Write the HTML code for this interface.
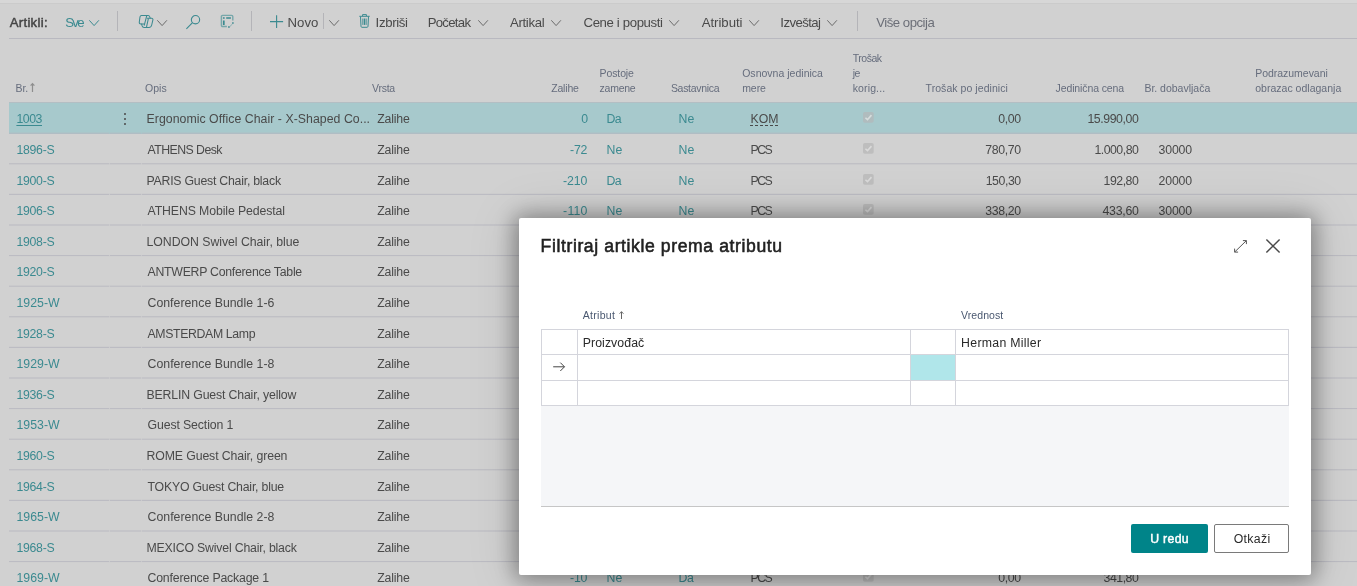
<!DOCTYPE html>
<html lang="sr-Latn">
<head>
<meta charset="utf-8">
<title>Artikli</title>
<style>
html,body{margin:0;padding:0;}
body{width:1357px;height:586px;overflow:hidden;position:relative;background:#d1d1d1;font-family:"Liberation Sans",sans-serif;}
.t{position:absolute;white-space:pre;}
.abs{position:absolute;}
.hl{position:absolute;height:1px;background:#bdbdc4;}
.vsep{position:absolute;width:1px;background:#b9b9b9;}
#dlg{position:absolute;left:519px;top:218px;width:792px;height:357px;background:#fff;box-shadow:0 1px 22px 4px rgba(0,0,0,.36),0 2px 50px 6px rgba(0,0,0,.10);border-radius:2px;}
svg{position:absolute;overflow:visible;}
.gl{position:absolute;left:0;top:0;width:1357px;height:586px;will-change:transform;}
</style>
</head>
<body>
<div class="abs" style="left:0px;top:0px;width:1357px;height:3px;background:#d7d7d7;"></div>
<div class="abs" style="left:0px;top:3px;width:1357px;height:1px;background:#cbcbcb;"></div>
<div class="abs" style="left:9px;top:38px;width:1348px;height:1px;background:#b9b9c0;"></div>
<div class="abs" style="left:117px;top:11px;width:1px;height:20px;background:#b4b4b8;"></div>
<div class="abs" style="left:251px;top:11px;width:1px;height:20px;background:#b4b4b8;"></div>
<div class="abs" style="left:857px;top:11px;width:1px;height:20px;background:#b4b4b8;"></div>
<div class="abs" style="left:323px;top:13px;width:1px;height:16px;background:#b4b4b8;"></div>
<svg style="left:89.2px;top:20px" width="10.2" height="6.6" viewBox="0 0 10.2 6.6"><path d="M0.3 0.3 L5.1 5.6 L9.899999999999999 0.3" fill="none" stroke="#3b8a90" stroke-width="1"/></svg>
<svg style="left:157.3px;top:20px" width="10.2" height="6.6" viewBox="0 0 10.2 6.6"><path d="M0.3 0.3 L5.1 5.6 L9.899999999999999 0.3" fill="none" stroke="#6a6a6a" stroke-width="1"/></svg>
<svg style="left:328.8px;top:20px" width="10.2" height="6.6" viewBox="0 0 10.2 6.6"><path d="M0.3 0.3 L5.1 5.6 L9.899999999999999 0.3" fill="none" stroke="#6a6a6a" stroke-width="1"/></svg>
<svg style="left:477.5px;top:20px" width="10.2" height="6.6" viewBox="0 0 10.2 6.6"><path d="M0.3 0.3 L5.1 5.6 L9.899999999999999 0.3" fill="none" stroke="#6a6a6a" stroke-width="1"/></svg>
<svg style="left:550.8px;top:20px" width="10.2" height="6.6" viewBox="0 0 10.2 6.6"><path d="M0.3 0.3 L5.1 5.6 L9.899999999999999 0.3" fill="none" stroke="#6a6a6a" stroke-width="1"/></svg>
<svg style="left:668.7px;top:20px" width="10.2" height="6.6" viewBox="0 0 10.2 6.6"><path d="M0.3 0.3 L5.1 5.6 L9.899999999999999 0.3" fill="none" stroke="#6a6a6a" stroke-width="1"/></svg>
<svg style="left:748.6px;top:20px" width="10.2" height="6.6" viewBox="0 0 10.2 6.6"><path d="M0.3 0.3 L5.1 5.6 L9.899999999999999 0.3" fill="none" stroke="#6a6a6a" stroke-width="1"/></svg>
<svg style="left:827.2px;top:20px" width="10.2" height="6.6" viewBox="0 0 10.2 6.6"><path d="M0.3 0.3 L5.1 5.6 L9.899999999999999 0.3" fill="none" stroke="#6a6a6a" stroke-width="1"/></svg>
<svg style="left:139px;top:14.900px" width="15" height="13" viewBox="0 0 15 13"><g fill="none" stroke="#3b8a90" stroke-width="1.05" stroke-linejoin="round" stroke-linecap="round"><path d="M5.200 8.900H1.700C.7 8.900.1 8 .3 7L1 1.800C1.200 1 1.600.5 2.400.5h6.800c.8 0 1.300.5 1.500 1.200l.5 1.500"/><path d="M7.700.8 5.300 10.200"/><path d="M8.300 3.200h4.300c.9 0 1.500.8 1.300 1.700L12.700 10c-.3 1.400-1.300 2.400-2.700 2.400H5c-1 0-1.600-.6-1.900-1.500L2.600 9"/><path d="M9.300 3.800 7.500 12.200"/></g></svg>
<svg style="left:186px;top:14px" width="16" height="16" viewBox="0 0 16 16"><g fill="none" stroke="#3b8a90" stroke-width="1.1"><circle cx="9.500" cy="5.700" r="4.150"/><path d="M6.500 8.700 0.400 14.800"/></g></svg>
<svg style="left:220px;top:14px" width="15" height="15" viewBox="0 0 15 15"><g fill="none" stroke="#3b8a90"><path d="M6.900 12.500H2.600c-.7 0-1.200-.5-1.200-1.200V2.600c0-.7.500-1.200 1.200-1.200h9c.7 0 1.200.5 1.200 1.200v3.900" stroke-width="1.400" opacity=".6"/><path d="M3.800 3.200v1.600M3.800 6.400v4.600M6.200 4h4.700" stroke-width="1.700"/><path d="M12.900 8.300v1.500M8.100 13h1.600" stroke-width="1.500"/><path d="M12.500 9.900 9.700 12.700" stroke-width="0.700" opacity=".7"/></g></svg>
<svg style="left:270px;top:15px" width="14" height="14" viewBox="0 0 14 14"><path d="M6.600 0.300v12.800M0 6.600h13.100" fill="none" stroke="#3b8a90" stroke-width="1.100"/></svg>
<svg style="left:359.400px;top:14.200px" width="11" height="14" viewBox="0 0 11 14"><g fill="none" stroke="#3b8a90" stroke-width="1"><path d="M0.300 2.300h10.400M3.600 2.200V0.600h3.800v1.600M1.500 2.500l.5 9.900c0 .5.400.9.900.9h5.200c.5 0 .9-.4.900-.9l.5-9.900"/><path d="M3.900 4.500v6.400M5.500 4.500v6.400M7.100 4.500v6.400"/></g></svg>
<svg style="left:30.3px;top:83.1px" width="5" height="8.9" viewBox="0 0 5 8.9"><path d="M2.500 8.9V0.700M0.600 2.700 2.500 0.700 4.400 2.700" fill="none" stroke="#8e8e8e" stroke-width="1.2"/></svg>
<div class="abs" style="left:9px;top:102px;width:1348px;height:31.5px;background:#a7c9cc;"></div>
<div class="abs" style="left:9px;top:102px;width:1348px;height:1px;background:#b3bec3;"></div>
<svg style="left:0;top:0" width="1357" height="586" viewBox="0 0 1357 586"><path d="M9 133.20H109.100M109.800 133.20H141M141.700 133.20H1357M9 163.80H109.100M109.800 163.80H141M141.700 163.80H1357M9 194.40H109.100M109.800 194.40H141M141.700 194.40H1357M9 225.00H109.100M109.800 225.00H141M141.700 225.00H1357M9 255.60H109.100M109.800 255.60H141M141.700 255.60H1357M9 286.20H109.100M109.800 286.20H141M141.700 286.20H1357M9 316.80H109.100M109.800 316.80H141M141.700 316.80H1357M9 347.40H109.100M109.800 347.40H141M141.700 347.40H1357M9 378.00H109.100M109.800 378.00H141M141.700 378.00H1357M9 408.60H109.100M109.800 408.60H141M141.700 408.60H1357M9 439.20H109.100M109.800 439.20H141M141.700 439.20H1357M9 469.80H109.100M109.800 469.80H141M141.700 469.80H1357M9 500.40H109.100M109.800 500.40H141M141.700 500.40H1357M9 531.00H109.100M109.800 531.00H141M141.700 531.00H1357M9 561.60H109.100M109.800 561.60H141M141.700 561.60H1357M9 592.20H109.100M109.800 592.20H141M141.700 592.20H1357" fill="none" stroke="#b7b7c0" stroke-width="0.9"/></svg>
<div class="abs" style="left:124.4px;top:113.0px;width:1.8px;height:1.8px;background:#4c4c4c;border-radius:50%;"></div>
<div class="abs" style="left:124.4px;top:118.0px;width:1.8px;height:1.8px;background:#4c4c4c;border-radius:50%;"></div>
<div class="abs" style="left:124.4px;top:123.0px;width:1.8px;height:1.8px;background:#4c4c4c;border-radius:50%;"></div>
<svg style="left:863.100px;top:112.3px" width="10.700" height="10.700" viewBox="0 0 11 11"><rect width="11" height="11" rx="1.800" fill="#b0bcbe"/><path d="M2.500 5.900 4.600 7.900 8.700 3.200" fill="none" stroke="#d6dddd" stroke-width="1.700"/></svg>
<svg style="left:863.100px;top:143.0px" width="10.700" height="10.700" viewBox="0 0 11 11"><rect width="11" height="11" rx="1.800" fill="#bebebe"/><path d="M2.500 5.900 4.600 7.900 8.700 3.200" fill="none" stroke="#dadada" stroke-width="1.700"/></svg>
<svg style="left:863.100px;top:173.6px" width="10.700" height="10.700" viewBox="0 0 11 11"><rect width="11" height="11" rx="1.800" fill="#bebebe"/><path d="M2.500 5.900 4.600 7.900 8.700 3.200" fill="none" stroke="#dadada" stroke-width="1.700"/></svg>
<svg style="left:863.100px;top:204.2px" width="10.700" height="10.700" viewBox="0 0 11 11"><rect width="11" height="11" rx="1.800" fill="#bebebe"/><path d="M2.500 5.900 4.600 7.900 8.700 3.200" fill="none" stroke="#dadada" stroke-width="1.700"/></svg>
<svg style="left:863.100px;top:571.4px" width="10.700" height="10.700" viewBox="0 0 11 11"><rect width="11" height="11" rx="1.800" fill="#bebebe"/><path d="M2.500 5.900 4.600 7.900 8.700 3.200" fill="none" stroke="#dadada" stroke-width="1.700"/></svg>
<div class="gl"><span class="t" style="left:9.70px;top:16.0px;font-size:13.2px;line-height:13.2px;color:#444444;letter-spacing:0.281px;-webkit-text-stroke:0.45px #444444;">Artikli:</span>
<span class="t" style="left:65.30px;top:16.0px;font-size:13.2px;line-height:13.2px;color:#3b8a90;letter-spacing:-1.745px;">Sve</span>
<span class="t" style="left:287.50px;top:16.0px;font-size:13.2px;line-height:13.2px;color:#4a4a4a;letter-spacing:0.049px;">Novo</span>
<span class="t" style="left:375.60px;top:16.0px;font-size:13.2px;line-height:13.2px;color:#4a4a4a;letter-spacing:-0.351px;">Izbriši</span>
<span class="t" style="left:427.70px;top:16.0px;font-size:13.2px;line-height:13.2px;color:#4a4a4a;letter-spacing:-0.726px;">Početak</span>
<span class="t" style="left:509.90px;top:16.0px;font-size:13.2px;line-height:13.2px;color:#4a4a4a;letter-spacing:-0.302px;">Artikal</span>
<span class="t" style="left:583.50px;top:16.0px;font-size:13.2px;line-height:13.2px;color:#4a4a4a;letter-spacing:-0.368px;">Cene i popusti</span>
<span class="t" style="left:701.70px;top:16.0px;font-size:13.2px;line-height:13.2px;color:#4a4a4a;letter-spacing:-0.031px;">Atributi</span>
<span class="t" style="left:780.30px;top:16.0px;font-size:13.2px;line-height:13.2px;color:#4a4a4a;letter-spacing:-0.583px;">Izveštaj</span>
<span class="t" style="left:876.30px;top:16.0px;font-size:13.2px;line-height:13.2px;color:#6c6f78;letter-spacing:-0.510px;">Više opcija</span>
<span class="t" style="left:15.60px;top:83.0px;font-size:10.5px;line-height:10.5px;color:#666d7d;letter-spacing:-0.160px;">Br.</span>
<span class="t" style="left:144.90px;top:83.0px;font-size:10.5px;line-height:10.5px;color:#666d7d;letter-spacing:0.087px;">Opis</span>
<span class="t" style="left:372.10px;top:83.0px;font-size:10.5px;line-height:10.5px;color:#666d7d;letter-spacing:-0.269px;">Vrsta</span>
<span class="t" style="left:551.20px;top:83.0px;font-size:10.5px;line-height:10.5px;color:#666d7d;letter-spacing:-0.172px;">Zalihe</span>
<span class="t" style="left:599.60px;top:68.0px;font-size:10.5px;line-height:10.5px;color:#666d7d;letter-spacing:-0.114px;">Postoje</span>
<span class="t" style="left:599.60px;top:83.0px;font-size:10.5px;line-height:10.5px;color:#666d7d;letter-spacing:-0.263px;">zamene</span>
<span class="t" style="left:670.90px;top:83.0px;font-size:10.5px;line-height:10.5px;color:#666d7d;letter-spacing:-0.302px;">Sastavnica</span>
<span class="t" style="left:742.20px;top:68.0px;font-size:10.5px;line-height:10.5px;color:#666d7d;letter-spacing:0.013px;">Osnovna jedinica</span>
<span class="t" style="left:742.20px;top:83.0px;font-size:10.5px;line-height:10.5px;color:#666d7d;letter-spacing:-0.061px;">mere</span>
<span class="t" style="left:852.70px;top:53.0px;font-size:10.5px;line-height:10.5px;color:#666d7d;letter-spacing:-0.470px;">Trošak</span>
<span class="t" style="left:852.70px;top:68.0px;font-size:10.5px;line-height:10.5px;color:#666d7d;letter-spacing:-0.533px;">je</span>
<span class="t" style="left:852.70px;top:83.0px;font-size:10.5px;line-height:10.5px;color:#666d7d;letter-spacing:0.130px;">korig...</span>
<span class="t" style="left:925.60px;top:83.0px;font-size:10.5px;line-height:10.5px;color:#666d7d;letter-spacing:0.054px;">Trošak po jedinici</span>
<span class="t" style="left:1055.60px;top:83.0px;font-size:10.5px;line-height:10.5px;color:#666d7d;letter-spacing:-0.124px;">Jedinična cena</span>
<span class="t" style="left:1144.40px;top:83.0px;font-size:10.5px;line-height:10.5px;color:#666d7d;letter-spacing:-0.009px;">Br. dobavljača</span>
<span class="t" style="left:1255.20px;top:68.0px;font-size:10.5px;line-height:10.5px;color:#666d7d;letter-spacing:-0.027px;">Podrazumevani</span>
<span class="t" style="left:1255.20px;top:83.0px;font-size:10.5px;line-height:10.5px;color:#666d7d;letter-spacing:0.014px;">obrazac odlaganja</span>
<span class="t" style="left:16.40px;top:113.0px;font-size:12.3px;line-height:12.3px;color:#3b8a90;letter-spacing:-0.439px;text-decoration:underline;text-decoration-thickness:1px;text-underline-offset:2px;">1003</span>
<span class="t" style="left:146.50px;top:113.0px;font-size:12.3px;line-height:12.3px;color:#4a4a4a;letter-spacing:0.043px;">Ergonomic Office Chair - X-Shaped Co...</span>
<span class="t" style="left:377.30px;top:113.0px;font-size:12.3px;line-height:12.3px;color:#4a4a4a;letter-spacing:-0.191px;">Zalihe</span>
<span class="t" style="left:581.30px;top:113.0px;font-size:12.3px;line-height:12.3px;color:#3b8a90;">0</span>
<span class="t" style="left:606.40px;top:113.0px;font-size:12.3px;line-height:12.3px;color:#3b8a90;letter-spacing:-0.580px;">Da</span>
<span class="t" style="left:678.60px;top:113.0px;font-size:12.3px;line-height:12.3px;color:#3b8a90;letter-spacing:0.120px;">Ne</span>
<span class="t" style="left:750.50px;top:113.0px;font-size:12.3px;line-height:12.3px;color:#4a4a4a;letter-spacing:0.017px;text-decoration:underline dashed;text-decoration-thickness:1px;text-underline-offset:2px;">KOM</span>
<span class="t" style="left:998.20px;top:113.0px;font-size:12.3px;line-height:12.3px;color:#4a4a4a;letter-spacing:-0.331px;">0,00</span>
<span class="t" style="left:1087.40px;top:113.0px;font-size:12.3px;line-height:12.3px;color:#4a4a4a;letter-spacing:-0.408px;">15.990,00</span>
<span class="t" style="left:16.40px;top:144.0px;font-size:12.3px;line-height:12.3px;color:#3b8a90;letter-spacing:-0.270px;">1896-S</span>
<span class="t" style="left:147.50px;top:144.0px;font-size:12.3px;line-height:12.3px;color:#4a4a4a;letter-spacing:-0.545px;">ATHENS Desk</span>
<span class="t" style="left:377.30px;top:144.0px;font-size:12.3px;line-height:12.3px;color:#4a4a4a;letter-spacing:-0.191px;">Zalihe</span>
<span class="t" style="left:570.10px;top:144.0px;font-size:12.3px;line-height:12.3px;color:#3b8a90;letter-spacing:-0.217px;">-72</span>
<span class="t" style="left:606.40px;top:144.0px;font-size:12.3px;line-height:12.3px;color:#3b8a90;letter-spacing:0.120px;">Ne</span>
<span class="t" style="left:678.60px;top:144.0px;font-size:12.3px;line-height:12.3px;color:#3b8a90;letter-spacing:0.120px;">Ne</span>
<span class="t" style="left:750.50px;top:144.0px;font-size:12.3px;line-height:12.3px;color:#4a4a4a;letter-spacing:-1.541px;">PCS</span>
<span class="t" style="left:985.20px;top:144.0px;font-size:12.3px;line-height:12.3px;color:#4a4a4a;letter-spacing:-0.334px;">780,70</span>
<span class="t" style="left:1094.40px;top:144.0px;font-size:12.3px;line-height:12.3px;color:#4a4a4a;letter-spacing:-0.490px;">1.000,80</span>
<span class="t" style="left:1158.60px;top:144.0px;font-size:12.3px;line-height:12.3px;color:#4a4a4a;letter-spacing:-0.189px;">30000</span>
<span class="t" style="left:16.40px;top:175.0px;font-size:12.3px;line-height:12.3px;color:#3b8a90;letter-spacing:-0.270px;">1900-S</span>
<span class="t" style="left:146.50px;top:175.0px;font-size:12.3px;line-height:12.3px;color:#4a4a4a;letter-spacing:-0.232px;">PARIS Guest Chair, black</span>
<span class="t" style="left:377.30px;top:175.0px;font-size:12.3px;line-height:12.3px;color:#4a4a4a;letter-spacing:-0.191px;">Zalihe</span>
<span class="t" style="left:563.10px;top:175.0px;font-size:12.3px;line-height:12.3px;color:#3b8a90;letter-spacing:-0.091px;">-210</span>
<span class="t" style="left:606.40px;top:175.0px;font-size:12.3px;line-height:12.3px;color:#3b8a90;letter-spacing:-0.580px;">Da</span>
<span class="t" style="left:678.60px;top:175.0px;font-size:12.3px;line-height:12.3px;color:#3b8a90;letter-spacing:0.120px;">Ne</span>
<span class="t" style="left:750.50px;top:175.0px;font-size:12.3px;line-height:12.3px;color:#4a4a4a;letter-spacing:-1.541px;">PCS</span>
<span class="t" style="left:985.70px;top:175.0px;font-size:12.3px;line-height:12.3px;color:#4a4a4a;letter-spacing:-0.434px;">150,30</span>
<span class="t" style="left:1103.50px;top:175.0px;font-size:12.3px;line-height:12.3px;color:#4a4a4a;letter-spacing:-0.454px;">192,80</span>
<span class="t" style="left:1158.60px;top:175.0px;font-size:12.3px;line-height:12.3px;color:#4a4a4a;letter-spacing:-0.189px;">20000</span>
<span class="t" style="left:16.40px;top:205.0px;font-size:12.3px;line-height:12.3px;color:#3b8a90;letter-spacing:-0.270px;">1906-S</span>
<span class="t" style="left:147.50px;top:205.0px;font-size:12.3px;line-height:12.3px;color:#4a4a4a;letter-spacing:-0.112px;">ATHENS Mobile Pedestal</span>
<span class="t" style="left:377.30px;top:205.0px;font-size:12.3px;line-height:12.3px;color:#4a4a4a;letter-spacing:-0.191px;">Zalihe</span>
<span class="t" style="left:563.10px;top:205.0px;font-size:12.3px;line-height:12.3px;color:#3b8a90;letter-spacing:0.213px;">-110</span>
<span class="t" style="left:606.40px;top:205.0px;font-size:12.3px;line-height:12.3px;color:#3b8a90;letter-spacing:0.120px;">Ne</span>
<span class="t" style="left:678.60px;top:205.0px;font-size:12.3px;line-height:12.3px;color:#3b8a90;letter-spacing:0.120px;">Ne</span>
<span class="t" style="left:750.50px;top:205.0px;font-size:12.3px;line-height:12.3px;color:#4a4a4a;letter-spacing:-1.541px;">PCS</span>
<span class="t" style="left:985.20px;top:205.0px;font-size:12.3px;line-height:12.3px;color:#4a4a4a;letter-spacing:-0.334px;">338,20</span>
<span class="t" style="left:1102.50px;top:205.0px;font-size:12.3px;line-height:12.3px;color:#4a4a4a;letter-spacing:-0.254px;">433,60</span>
<span class="t" style="left:1158.60px;top:205.0px;font-size:12.3px;line-height:12.3px;color:#4a4a4a;letter-spacing:-0.189px;">30000</span>
<span class="t" style="left:16.40px;top:236.0px;font-size:12.3px;line-height:12.3px;color:#3b8a90;letter-spacing:-0.270px;">1908-S</span>
<span class="t" style="left:146.50px;top:236.0px;font-size:12.3px;line-height:12.3px;color:#4a4a4a;letter-spacing:-0.039px;">LONDON Swivel Chair, blue</span>
<span class="t" style="left:377.30px;top:236.0px;font-size:12.3px;line-height:12.3px;color:#4a4a4a;letter-spacing:-0.191px;">Zalihe</span>
<span class="t" style="left:16.40px;top:266.0px;font-size:12.3px;line-height:12.3px;color:#3b8a90;letter-spacing:-0.270px;">1920-S</span>
<span class="t" style="left:147.50px;top:266.0px;font-size:12.3px;line-height:12.3px;color:#4a4a4a;letter-spacing:-0.267px;">ANTWERP Conference Table</span>
<span class="t" style="left:377.30px;top:266.0px;font-size:12.3px;line-height:12.3px;color:#4a4a4a;letter-spacing:-0.191px;">Zalihe</span>
<span class="t" style="left:16.40px;top:297.0px;font-size:12.3px;line-height:12.3px;color:#3b8a90;letter-spacing:0.050px;">1925-W</span>
<span class="t" style="left:147.50px;top:297.0px;font-size:12.3px;line-height:12.3px;color:#4a4a4a;letter-spacing:0.018px;">Conference Bundle 1-6</span>
<span class="t" style="left:377.30px;top:297.0px;font-size:12.3px;line-height:12.3px;color:#4a4a4a;letter-spacing:-0.191px;">Zalihe</span>
<span class="t" style="left:16.40px;top:328.0px;font-size:12.3px;line-height:12.3px;color:#3b8a90;letter-spacing:-0.270px;">1928-S</span>
<span class="t" style="left:147.50px;top:328.0px;font-size:12.3px;line-height:12.3px;color:#4a4a4a;letter-spacing:-0.362px;">AMSTERDAM Lamp</span>
<span class="t" style="left:377.30px;top:328.0px;font-size:12.3px;line-height:12.3px;color:#4a4a4a;letter-spacing:-0.191px;">Zalihe</span>
<span class="t" style="left:16.40px;top:358.0px;font-size:12.3px;line-height:12.3px;color:#3b8a90;letter-spacing:0.050px;">1929-W</span>
<span class="t" style="left:147.50px;top:358.0px;font-size:12.3px;line-height:12.3px;color:#4a4a4a;letter-spacing:0.023px;">Conference Bundle 1-8</span>
<span class="t" style="left:377.30px;top:358.0px;font-size:12.3px;line-height:12.3px;color:#4a4a4a;letter-spacing:-0.191px;">Zalihe</span>
<span class="t" style="left:16.40px;top:389.0px;font-size:12.3px;line-height:12.3px;color:#3b8a90;letter-spacing:-0.270px;">1936-S</span>
<span class="t" style="left:146.50px;top:389.0px;font-size:12.3px;line-height:12.3px;color:#4a4a4a;letter-spacing:-0.156px;">BERLIN Guest Chair, yellow</span>
<span class="t" style="left:377.30px;top:389.0px;font-size:12.3px;line-height:12.3px;color:#4a4a4a;letter-spacing:-0.191px;">Zalihe</span>
<span class="t" style="left:16.40px;top:419.0px;font-size:12.3px;line-height:12.3px;color:#3b8a90;letter-spacing:0.050px;">1953-W</span>
<span class="t" style="left:147.50px;top:419.0px;font-size:12.3px;line-height:12.3px;color:#4a4a4a;letter-spacing:-0.118px;">Guest Section 1</span>
<span class="t" style="left:377.30px;top:419.0px;font-size:12.3px;line-height:12.3px;color:#4a4a4a;letter-spacing:-0.191px;">Zalihe</span>
<span class="t" style="left:16.40px;top:450.0px;font-size:12.3px;line-height:12.3px;color:#3b8a90;letter-spacing:-0.270px;">1960-S</span>
<span class="t" style="left:146.50px;top:450.0px;font-size:12.3px;line-height:12.3px;color:#4a4a4a;letter-spacing:-0.117px;">ROME Guest Chair, green</span>
<span class="t" style="left:377.30px;top:450.0px;font-size:12.3px;line-height:12.3px;color:#4a4a4a;letter-spacing:-0.191px;">Zalihe</span>
<span class="t" style="left:16.40px;top:481.0px;font-size:12.3px;line-height:12.3px;color:#3b8a90;letter-spacing:-0.270px;">1964-S</span>
<span class="t" style="left:147.50px;top:481.0px;font-size:12.3px;line-height:12.3px;color:#4a4a4a;letter-spacing:-0.210px;">TOKYO Guest Chair, blue</span>
<span class="t" style="left:377.30px;top:481.0px;font-size:12.3px;line-height:12.3px;color:#4a4a4a;letter-spacing:-0.191px;">Zalihe</span>
<span class="t" style="left:16.40px;top:511.0px;font-size:12.3px;line-height:12.3px;color:#3b8a90;letter-spacing:0.050px;">1965-W</span>
<span class="t" style="left:147.50px;top:511.0px;font-size:12.3px;line-height:12.3px;color:#4a4a4a;letter-spacing:0.023px;">Conference Bundle 2-8</span>
<span class="t" style="left:377.30px;top:511.0px;font-size:12.3px;line-height:12.3px;color:#4a4a4a;letter-spacing:-0.191px;">Zalihe</span>
<span class="t" style="left:16.40px;top:542.0px;font-size:12.3px;line-height:12.3px;color:#3b8a90;letter-spacing:-0.270px;">1968-S</span>
<span class="t" style="left:146.50px;top:542.0px;font-size:12.3px;line-height:12.3px;color:#4a4a4a;letter-spacing:-0.191px;">MEXICO Swivel Chair, black</span>
<span class="t" style="left:377.30px;top:542.0px;font-size:12.3px;line-height:12.3px;color:#4a4a4a;letter-spacing:-0.191px;">Zalihe</span>
<span class="t" style="left:16.40px;top:572.0px;font-size:12.3px;line-height:12.3px;color:#3b8a90;letter-spacing:0.050px;">1969-W</span>
<span class="t" style="left:147.50px;top:572.0px;font-size:12.3px;line-height:12.3px;color:#4a4a4a;letter-spacing:-0.187px;">Conference Package 1</span>
<span class="t" style="left:377.30px;top:572.0px;font-size:12.3px;line-height:12.3px;color:#4a4a4a;letter-spacing:-0.191px;">Zalihe</span>
<span class="t" style="left:570.10px;top:572.0px;font-size:12.3px;line-height:12.3px;color:#3b8a90;letter-spacing:-0.217px;">-10</span>
<span class="t" style="left:606.40px;top:572.0px;font-size:12.3px;line-height:12.3px;color:#3b8a90;letter-spacing:0.120px;">Ne</span>
<span class="t" style="left:678.60px;top:572.0px;font-size:12.3px;line-height:12.3px;color:#3b8a90;letter-spacing:-0.580px;">Da</span>
<span class="t" style="left:750.50px;top:572.0px;font-size:12.3px;line-height:12.3px;color:#4a4a4a;letter-spacing:-1.541px;">PCS</span>
<span class="t" style="left:998.20px;top:572.0px;font-size:12.3px;line-height:12.3px;color:#4a4a4a;letter-spacing:-0.331px;">0,00</span>
<span class="t" style="left:1103.50px;top:572.0px;font-size:12.3px;line-height:12.3px;color:#4a4a4a;letter-spacing:-0.454px;">341,80</span></div>
<div id="dlg"></div>
<div class="abs" style="left:541px;top:406px;width:748px;height:100px;background:#f5f6f8;"></div>
<div class="abs" style="left:541px;top:506px;width:748px;height:1px;background:#c6c6c6;"></div>
<div class="abs" style="left:910px;top:354px;width:46px;height:27px;background:#b0e6ea;"></div>
<div class="abs" style="left:541px;top:329px;width:748px;height:1px;background:#d4d5dc;"></div>
<div class="abs" style="left:541px;top:354px;width:748px;height:1px;background:#d4d5dc;"></div>
<div class="abs" style="left:541px;top:380px;width:748px;height:1px;background:#d4d5dc;"></div>
<div class="abs" style="left:541px;top:405px;width:748px;height:1px;background:#d4d5dc;"></div>
<div class="abs" style="left:541px;top:329px;width:1px;height:77px;background:#d4d5dc;"></div>
<div class="abs" style="left:577px;top:329px;width:1px;height:77px;background:#d4d5dc;"></div>
<div class="abs" style="left:910px;top:329px;width:1px;height:77px;background:#d4d5dc;"></div>
<div class="abs" style="left:955px;top:329px;width:1px;height:77px;background:#d4d5dc;"></div>
<div class="abs" style="left:1288px;top:329px;width:1px;height:77px;background:#d4d5dc;"></div>
<svg style="left:553.400px;top:362.400px" width="12" height="10" viewBox="0 0 12 10"><path d="M0.200 4.800h11.200M7.300 0.600l4.200 4.200-4.200 4.200" fill="none" stroke="#444" stroke-width="1"/></svg>
<svg style="left:618.95px;top:310.9px" width="5" height="8.0" viewBox="0 0 5 8.0"><path d="M2.500 8.0V0.700M0.600 2.700 2.500 0.700 4.400 2.700" fill="none" stroke="#666666" stroke-width="1.0"/></svg>
<svg style="left:1234.200px;top:239.600px" width="13" height="12.600" viewBox="0 0 13 12.600"><path d="M0.800 11.900 12.300 0.700M8.900 0.600h3.500v3.500M4.100 12.100H0.600V8.600" fill="none" stroke="#555" stroke-width="1"/></svg>
<svg style="left:1266px;top:239px" width="14" height="14" viewBox="0 0 14 14"><path d="M0.400 0.400 13.600 13.600M13.600 0.400 0.400 13.600" fill="none" stroke="#4a4a4a" stroke-width="1.450"/></svg>
<div class="abs" style="left:1131px;top:524px;width:77px;height:29px;background:#008489;border-radius:2px;"></div>
<div class="abs" style="left:1214px;top:524px;width:73px;height:27px;background:#fff;border:1px solid #7a7a7a;border-radius:2px;"></div>
<div class="gl"><span class="t" style="left:540.60px;top:238.0px;font-size:17.6px;line-height:17.6px;color:#212121;letter-spacing:0.599px;-webkit-text-stroke:0.55px #212121;">Filtriraj artikle prema atributu</span>
<span class="t" style="left:582.80px;top:310.0px;font-size:10.5px;line-height:10.5px;color:#4a5870;letter-spacing:0.295px;">Atribut</span>
<span class="t" style="left:961.10px;top:310.0px;font-size:10.5px;line-height:10.5px;color:#4a5870;letter-spacing:0.069px;">Vrednost</span>
<span class="t" style="left:582.70px;top:337.0px;font-size:12.3px;line-height:12.3px;color:#2a2a2a;letter-spacing:0.080px;">Proizvođač</span>
<span class="t" style="left:961.10px;top:337.0px;font-size:12.3px;line-height:12.3px;color:#2a2a2a;letter-spacing:0.281px;">Herman Miller</span>
<span class="t" style="left:1150.20px;top:533.0px;font-size:12.3px;line-height:12.3px;color:#ffffff;letter-spacing:0.306px;-webkit-text-stroke:0.45px #ffffff;">U redu</span>
<span class="t" style="left:1233.70px;top:533.0px;font-size:12.3px;line-height:12.3px;color:#2a2a2a;letter-spacing:0.337px;">Otkaži</span></div>
</body>
</html>
